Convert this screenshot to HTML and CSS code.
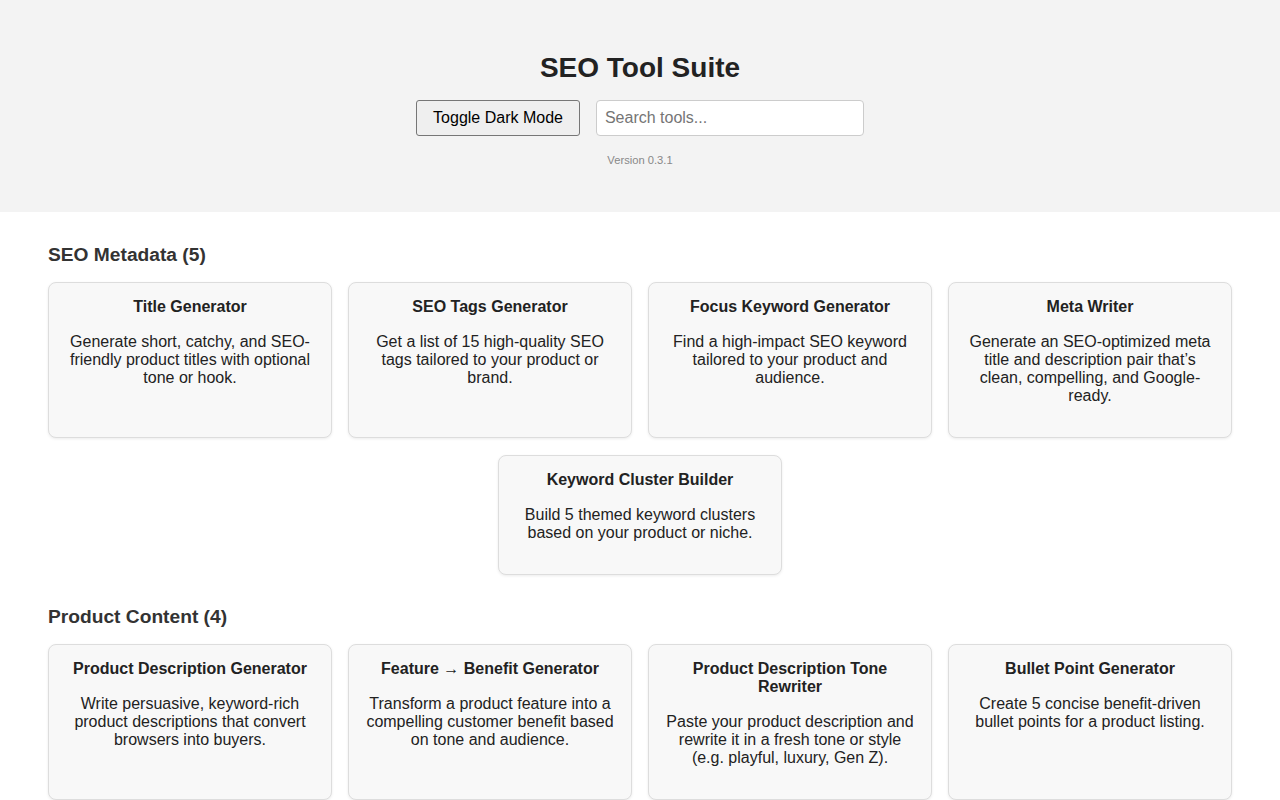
FILE: index.html
```html
<!DOCTYPE html>
<html>
<head>
<meta charset="utf-8" />
<title>SEO Tool Suite</title>
<link rel="stylesheet" href="styles.css">
</head>
<body>
	<div class="header">
		<h1>SEO Tool Suite</h1>
		<div class="controls">
			<button class="mode_btn">Toggle Dark Mode</button>
			<input class="search" type="text" placeholder="Search tools...">
		</div>
		<p class="version">Version 0.3.1</p>
	</div>

	<div class="main">
		<div class="section">
			<h2>SEO Metadata (5)</h2>
			<div class="tool_list">
				<div class="tool">
					<h3>Title Generator</h3>
					<p>Generate short, catchy, and SEO-friendly product titles with optional tone or hook.</p>
				</div>
				<div class="tool">
					<h3>SEO Tags Generator</h3>
					<p>Get a list of 15 high-quality SEO tags tailored to your product or brand.</p>
				</div>
				<div class="tool">
					<h3>Focus Keyword Generator</h3>
					<p>Find a high-impact SEO keyword tailored to your product and audience.</p>
				</div>
				<div class="tool">
					<h3>Meta Writer</h3>
					<p>Generate an SEO-optimized meta title and description pair that’s clean, compelling, and Google-ready.</p>
				</div>
				<div class="tool">
					<h3>Keyword Cluster Builder</h3>
					<p>Build 5 themed keyword clusters based on your product or niche.</p>
				</div>
			</div>
		</div>

		<div class="section">
			<h2>Product Content (4)</h2>
			<div class="tool_list">
				<div class="tool">
					<h3>Product Description Generator</h3>
					<p>Write persuasive, keyword-rich product descriptions that convert browsers into buyers.</p>
				</div>
				<div class="tool">
					<h3>Feature → Benefit Generator</h3>
					<p>Transform a product feature into a compelling customer benefit based on tone and audience.</p>
				</div>
				<div class="tool">
					<h3>Product Description Tone Rewriter</h3>
					<p>Paste your product description and rewrite it in a fresh tone or style (e.g. playful, luxury, Gen Z).</p>
				</div>
				<div class="tool">
					<h3>Bullet Point Generator</h3>
					<p>Create 5 concise benefit-driven bullet points for a product listing.</p>
				</div>
			</div>
		</div>
	</div>
</body>
</html>
```

FILE: styles.css
```css
html, body, div, h1, h2, h3, p {
	margin: 0;
	padding: 0;
}

body {
	font-family: "Liberation Sans", Arial, sans-serif;
	font-size: 16px;
	color: #222;
	background: #fff;
}

/*头部*/
.header {
	background: #f3f3f3;
	padding: 32px 16px;
	text-align: center;
}

.header h1 {
	font-size: 28px;
	color: #222;
	margin: 20px 0 16px 0;
}

.controls {
	display: flex;
	justify-content: center;
	gap: 16px;
}

.mode_btn {
	font-family: "Liberation Sans", Arial, sans-serif;
	font-size: 16px;
	color: #000;
	padding: 8px 16px;
	background: #efefef;
	border: 1px solid #767676;
	border-radius: 3px;
	cursor: pointer;
}

.search {
	font-family: "Liberation Sans", Arial, sans-serif;
	font-size: 16px;
	width: 250px;
	padding: 8px;
	border: 1px solid #ccc;
	border-radius: 4px;
	background: #fff;
}

.search::placeholder {
	color: #757575;
}

.version {
	font-size: 11.2px;
	color: #888;
	margin: 18px 0 14px 0;
}

/*工具列表*/
.main {
	padding: 32px 48px;
}

.section {
	margin-bottom: 31px;
}

.section h2 {
	font-size: 19.2px;
	color: #333;
	margin-bottom: 16px;
}

.tool_list {
	display: flex;
	flex-wrap: wrap;
	justify-content: center;
	gap: 17px 16px;
}

.tool {
	width: 284px;
	box-sizing: border-box;
	padding: 15px 16px 16px 16px;
	background: #f8f8f8;
	border: 1px solid #ddd;
	border-radius: 8px;
	box-shadow: 0 1px 3px rgba(0, 0, 0, 0.08);
	text-align: center;
}

.tool h3 {
	font-size: 16px;
	color: #222;
}

.tool p {
	margin: 17px 0 16px 0;
	color: #222;
}
```
